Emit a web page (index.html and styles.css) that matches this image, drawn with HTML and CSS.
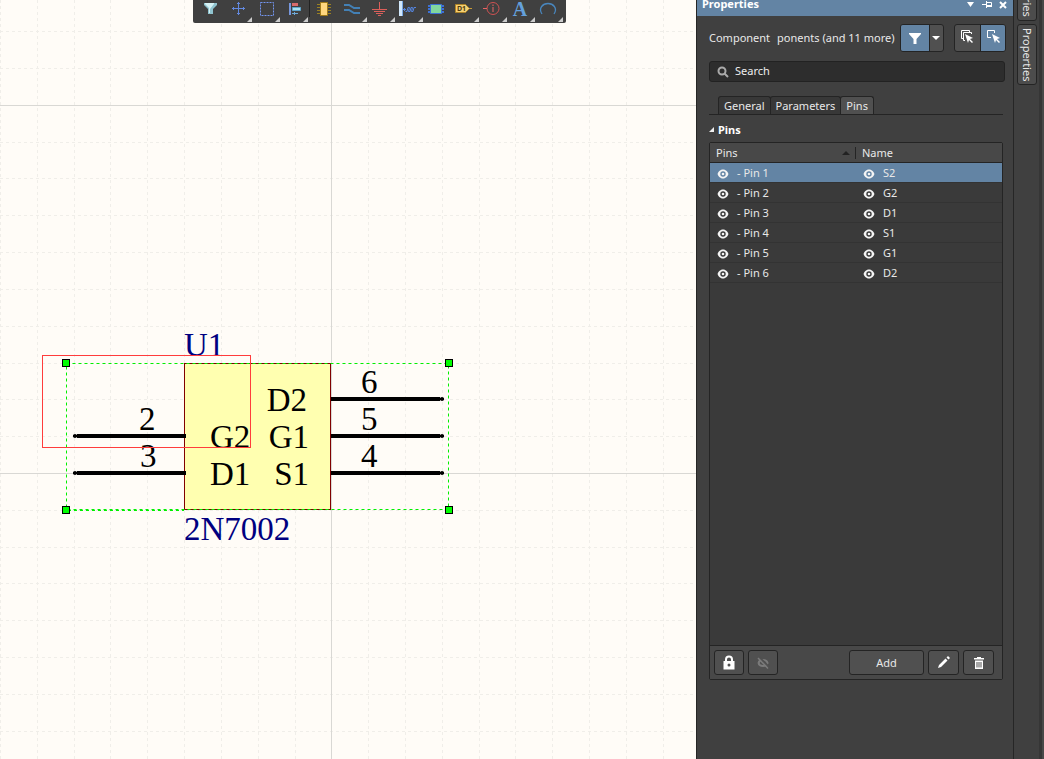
FILE: index.html
```
<!DOCTYPE html>
<html lang="en">
<head>
<meta charset="utf-8">
<title>Schematic editor</title>
<link rel="stylesheet" href="styles.css">
</head>
<body>
<svg class="defs" aria-hidden="true">
  <symbol id="eye" viewBox="0 0 12 12"><path fill="#f4f4f4" fill-rule="evenodd" d="M6 1.500C3 1.500 1 4 .6 6 1 8 3 10.500 6 10.500s5-2.500 5.400-4.500C11 4 9 1.500 6 1.500zm0 1.800a2.700 2.700 0 1 1 0 5.400 2.700 2.700 0 0 1 0-5.400z"/><circle cx="6" cy="6" r="1.300" fill="#f4f4f4"/></symbol>
</svg>
<div class="app">
  <main class="editor">
    <svg class="sheet" role="img" aria-label="Schematic sheet">
      <path class="grid" d="M.5 0V2000M37.500 0V2000M74.500 0V2000M110.500 0V2000M147.500 0V2000M184.500 0V2000M221.500 0V2000M258.500 0V2000M295.500 0V2000M368.500 0V2000M405.500 0V2000M442.500 0V2000M479.500 0V2000M515.500 0V2000M552.500 0V2000M589.500 0V2000M626.500 0V2000M663.500 0V2000"/>
      <path class="grid" d="M0 31.500H3000M0 68.500H3000M0 142.500H3000M0 178.500H3000M0 215.500H3000M0 252.500H3000M0 289.500H3000M0 326.500H3000M0 363.500H3000M0 399.500H3000M0 436.500H3000M0 510.500H3000M0 547.500H3000M0 583.500H3000M0 620.500H3000M0 657.500H3000M0 694.500H3000M0 731.500H3000"/>
      <path class="grid-major" d="M331.500 0V2000M0 105.500H3000M0 473.500H3000"/>
      <rect class="part" x="184.500" y="363.500" width="146" height="146"/>
      <g class="pin">
        <path class="pin-line" d="M77 436H186M77 473H186M331 399H440M331 436H440M331 473H440"/>
        <path class="pin-end" d="M73 436H78M73 473H78M438 399H444M438 436H444M438 473H444"/>
        <circle cx="442" cy="399" r="2"/><circle cx="442" cy="436" r="2"/><circle cx="442" cy="473" r="2"/>
        <circle cx="75" cy="436" r="2"/><circle cx="75" cy="473" r="2"/>
      </g>
      <g class="label">
        <text x="139" y="430">2</text><text x="140" y="467">3</text>
        <text x="361" y="393">6</text><text x="361" y="430">5</text><text x="361" y="467">4</text>
        <text x="210" y="448">G2</text><text x="210" y="485">D1</text>
        <text x="307" y="411" text-anchor="end">D2</text>
        <text x="309" y="448" text-anchor="end">G1</text>
        <text x="309" y="485" text-anchor="end">S1</text>
      </g>
      <g class="label label-part">
        <text x="184" y="356">U1</text><text x="184" y="540">2N7002</text>
      </g>
      <path class="selection" d="M66.500 363.500H448.500V509.500H66.500V363.500M68 510.500H184"/>
      <g class="handle">
        <rect x="62.500" y="359.500" width="7" height="7"/><rect x="445.500" y="359.500" width="7" height="7"/>
        <rect x="62.500" y="506.500" width="7" height="7"/><rect x="445.500" y="506.500" width="7" height="7"/>
      </g>
      <rect class="marquee" x="42.500" y="355.500" width="208" height="92"/>
    </svg>
    <div class="toolbar" role="toolbar" aria-label="Active bar">
      <button class="tool" aria-label="Filter"><svg viewBox="0 0 20 18"><path fill="#8fc3cf" d="M4 3h13v2l-4 4v5H8V9L4 5z"/><path fill="#d5f2f5" d="M5 3h9v1l-4 5v4H9V8L5 4z"/></svg></button>
      <button class="tool more" aria-label="Move"><svg viewBox="0 0 20 18"><path stroke="#6389df" fill="none" d="M10.500 2v13M4 8.500h13M9 3.500h3M9 13.500h3M5.500 7v3M15.500 7v3"/></svg></button>
      <button class="tool more" aria-label="Select"><svg viewBox="0 0 20 18"><path stroke="#7395ef" fill="none" stroke-dasharray="2 1" d="M4.500 2.500h13v13h-13z"/></svg></button>
      <button class="tool more" aria-label="Align"><svg viewBox="0 0 20 18"><path fill="#7797dc" d="M5 3h2v12H5z"/><path fill="#d86c6c" d="M8 3h6v3H8z"/><path fill="#a9e2ee" stroke="#5fa6cf" d="M8.500 7.500h8v3h-8z"/><path stroke="#6ea9d8" d="M8 13.500h6M10.500 12v3"/></svg></button>
      <span class="sep"></span>
      <button class="tool" aria-label="Place part"><svg viewBox="0 0 20 18"><path stroke="#9b8122" d="M2 4.500h14M2 7.500h14M2 10.500h14M2 13.500h14"/><path fill="#ffd77f" stroke="#a17b19" d="M5.500 2.500h7v13h-7z"/></svg></button>
      <button class="tool more" aria-label="Place wire"><svg viewBox="0 0 20 18"><path stroke="#4380b5" stroke-width="2" fill="none" d="M1 5h5l5 3h6M1 10h5l5 3h6"/></svg></button>
      <button class="tool more" aria-label="Place power port"><svg viewBox="0 0 20 18"><path stroke="#dc5f5a" fill="none" d="M8.500 2v7M1 9.500h15M3 11.500h11M5 13.500h7M7 15.500h3"/></svg></button>
      <button class="tool more" aria-label="Place harness"><svg viewBox="0 0 20 18"><path fill="#d2e8fb" d="M0 1h3v15H0z"/><path fill="#78a7e4" d="M3 1h1v15H3z"/><path stroke="#5584dc" fill="none" d="M4 9.500h3M5.500 8v3M6.500 11.500h1.500l1-4h1.500l-1 4h1.500l1-4h1.500l-1 4h1.500l1-4h2"/></svg></button>
      <button class="tool" aria-label="Place sheet symbol"><svg viewBox="0 0 20 18"><path stroke="#3c71d6" stroke-width="2" d="M1 6h16M1 9h16M1 12h16"/><path fill="#81d69e" stroke="#3c71d6" d="M3.500 4.500h11v9h-11z"/></svg></button>
      <button class="tool more" aria-label="Place port"><svg viewBox="0 0 20 18"><path fill="#f5cf72" stroke="#ad8429" d="M.5 4.500h10l4 4-4 4H.5z"/><path stroke="#c89a36" d="M14 8.500h3"/><text x="2" y="11" class="tool-port">D1</text></svg></button>
      <button class="tool more" aria-label="Place directive"><svg viewBox="0 0 20 18"><circle cx="10" cy="8.500" r="6" fill="none" stroke="#d05252"/><path stroke="#e86464" d="M0 8.500h4M10 7v5M10 4.500v1.500"/></svg></button>
      <button class="tool more" aria-label="Place text"><svg viewBox="0 0 20 18"><text x="9" y="16" class="tool-text" text-anchor="middle">A</text></svg></button>
      <button class="tool more" aria-label="Place arc"><svg viewBox="0 0 20 18"><path fill="none" stroke="#4986bd" stroke-width="1.300" d="M3 14C-1 8 4 3.500 9 3.500s10 4.500 6 10.500"/></svg></button>
    </div>
  </main>

  <aside class="panel">
    <header class="panel-title">
      <h1>Properties</h1>
      <button aria-label="Panel menu"><svg viewBox="0 0 12 10"><path fill="#fff" d="M2 2h7L5.500 7z"/></svg></button>
      <button aria-label="Pin panel"><svg viewBox="0 0 12 10"><path fill="none" stroke="#fff" d="M1 4.500h4M5.500 1v7M6 2.500h4.500v4"/><path stroke="#fff" stroke-width="2" d="M6 6h5"/></svg></button>
      <button aria-label="Close panel"><svg viewBox="0 0 12 10"><path stroke="#fff" stroke-width="2" d="M3 2l6 6M9 2L3 8"/></svg></button>
    </header>
    <div class="panel-body">
      <div class="scope">
        <span>Component</span>
        <span class="scope-filter">ponents (and 11 more)</span>
        <div class="group">
          <button class="on" aria-label="Selection filter"><svg viewBox="0 0 16 16"><path fill="#fff" d="M2 3h12v1L9.500 9v5h-3V9L2 4z"/></svg></button>
          <button class="narrow" aria-label="Filter options"><svg viewBox="0 0 16 16"><path fill="#fff" d="M4 6h8l-4 4z"/></svg></button>
        </div>
        <div class="group">
          <button class="pick" aria-label="Select all objects"><svg viewBox="0 0 16 16"><path fill="none" stroke="#fff" d="M4 9.500H2.500v-8h8V3M6 11.500H4.500v-8h8V5"/><path fill="#fff" d="M6 5l8 4-3 1 3 3-1 1-3-3-1 3z"/></svg></button>
          <button class="pick on" aria-label="Select one object"><svg viewBox="0 0 16 16"><path fill="none" stroke="#fff" d="M6 8.500H2.500v-7h7V4"/><path fill="#fff" d="M7 5l8 4-3 1 3 3-1 1-3-3-1 3z"/></svg></button>
        </div>
      </div>
      <label class="search">
        <svg viewBox="0 0 12 12"><circle cx="5" cy="5" r="3.500" fill="none" stroke="#aaa" stroke-width="2"/><path stroke="#aaa" stroke-width="2" d="M7.500 7.500l3.500 3.500"/></svg>
        <input type="text" placeholder="Search" aria-label="Search">
      </label>
      <nav class="tabs" role="tablist">
        <button role="tab">General</button><button role="tab">Parameters</button><button role="tab" class="current" aria-selected="true">Pins</button>
      </nav>
      <h2><svg viewBox="0 0 6 6"><path fill="#eee" d="M5 0v5H0z"/></svg>Pins</h2>
      <section class="pins">
        <div class="pins-scroll">
        <table>
          <thead><tr><th>Pins<svg class="sort" viewBox="0 0 8 4"><path fill="#222" d="M0 4l4-4 4 4z"/></svg></th><th>Name</th></tr></thead>
          <tbody>
            <tr class="selected"><td><svg><use href="#eye"/></svg>- Pin 1</td><td><svg><use href="#eye"/></svg>S2</td></tr>
            <tr><td><svg><use href="#eye"/></svg>- Pin 2</td><td><svg><use href="#eye"/></svg>G2</td></tr>
            <tr><td><svg><use href="#eye"/></svg>- Pin 3</td><td><svg><use href="#eye"/></svg>D1</td></tr>
            <tr><td><svg><use href="#eye"/></svg>- Pin 4</td><td><svg><use href="#eye"/></svg>S1</td></tr>
            <tr><td><svg><use href="#eye"/></svg>- Pin 5</td><td><svg><use href="#eye"/></svg>G1</td></tr>
            <tr><td><svg><use href="#eye"/></svg>- Pin 6</td><td><svg><use href="#eye"/></svg>D2</td></tr>
          </tbody>
        </table>
        </div>
        <footer class="actions">
          <button class="btn" aria-label="Lock pins"><svg viewBox="0 0 16 16"><path fill="#fff" fill-rule="evenodd" d="M2.500 6H4V4.500a4 4 0 0 1 8 0V6h1.500v8.500h-11zM6 6h4V4.500a2 2 0 0 0-4 0zm2 2.500a1.500 1.500 0 1 0 0 3 1.500 1.500 0 0 0 0-3z"/></svg></button>
          <button class="btn" aria-label="Hide pins" disabled><svg viewBox="0 0 16 16"><path fill="none" stroke="#7b7b7b" stroke-width="2" d="M3.500 8c1-4 8-4 9 0-1 4-8 4-9 0"/><path stroke="#505050" stroke-width="2" d="M4 2l10 10"/><path stroke="#7b7b7b" stroke-width="1.500" d="M3 3l10 10.500"/></svg></button>
          <button class="btn add">Add</button>
          <button class="btn" aria-label="Edit pin"><svg viewBox="0 0 16 16"><path fill="#fff" d="M2 13l1-3 6.500-6.500 2 2L5 12zM10.500 2.500L12 1l2 2-1.500 1.500z"/></svg></button>
          <button class="btn" aria-label="Delete pin"><svg viewBox="0 0 16 16"><path fill="#fff" fill-rule="evenodd" d="M6 2h4v1h3v1.500H3V3h3zM4 5.500h8V14H4zM5.500 7v5.500h1V7zM7.500 7v5.500h1V7zM9.500 7v5.500h1V7z"/></svg></button>
        </footer>
      </section>
    </div>
  </aside>

  <nav class="dock">
    <button class="dock-tab first">Libraries</button>
    <button class="dock-tab">Properties</button>
  </nav>
  <div class="edge"></div>
</div>
</body>
</html>
```
FILE: styles.css
```
* { box-sizing: border-box; }
body { margin: 0; background: #404040; color: #e8e8e8; font: 11px/16px "Noto Sans", "Open Sans", sans-serif; }
button { font: inherit; color: inherit; padding: 0; margin: 0; border: 0; background: none; }
h1, h2 { margin: 0; font-size: 11px; color: #fff; }
svg { display: block; }
.defs { position: absolute; width: 0; height: 0; }
.app { display: flex; height: 100vh; overflow: hidden; }

.editor { position: relative; flex: 1; min-width: 0; background: #fffcf7; }
.sheet { width: 100%; height: 100%; }
.grid { fill: none; stroke: #f0eee9; stroke-dasharray: 3 3; }
.grid-major { fill: none; stroke: #d9d8d4; }
.part { fill: #ffffb0; stroke: #800000; }
.pin-line { stroke: #000; stroke-width: 4; }
.pin-end { stroke: #000; stroke-width: 2; }
.label { font: 33px "Liberation Serif", serif; fill: #000; }
.label-part { fill: #000080; }
.selection { fill: none; stroke: #00f000; stroke-dasharray: 3 3; }
.handle { fill: #00ff00; stroke: #000; }
.marquee { fill: none; stroke: #ff3c3c; }

.toolbar { position: absolute; top: 0; left: 193px; display: flex; height: 23px; padding: 0 3px; background: #404040; border-radius: 0 0 2px 2px; }
.tool { position: relative; display: flex; align-items: flex-start; width: 28px; height: 22px; padding: 0 4px; }
.tool svg { width: 20px; height: 18px; overflow: visible; }
.more::after { content: ""; position: absolute; right: 0; bottom: 0; border: solid transparent; border-width: 5px 0 0 5px; border-right: 0; border-bottom: 5px solid #ccc; border-top: 0; }
.sep { width: 1px; height: 17px; margin: 0 1px; background: #222; }
.tool-port { font: bold 7px "Noto Sans", sans-serif; fill: #4b3a10; }
.tool-text { font: bold 20px "Liberation Serif", serif; fill: #64a0dc; }

.panel { display: flex; flex-direction: column; width: 318px; border: solid #262626; border-width: 0 1px; }
.panel-title { display: flex; align-items: flex-start; height: 16px; padding: 0 2px 0 5px; background: #6384a4; }
.panel-title h1 { flex: 1; line-height: 8px; }
.panel-title button { width: 16px; height: 10px; padding: 0 2px; }
.panel-title svg { width: 12px; height: 10px; }
.panel-body { flex: 1; padding: 8px 8px 79px 12px; display: flex; flex-direction: column; }

.scope { display: flex; align-items: center; gap: 10px; height: 28px; }
.scope-filter { flex: 1; white-space: nowrap; text-align: right; margin: 0 -5px 0 -3px; }
.group { display: flex; flex: none; border: 1px solid #242424; border-radius: 3px; background: #505050; overflow: hidden; }
.group button { display: flex; align-items: center; justify-content: center; width: 28px; height: 26px; }
.group .narrow { width: 14px; border-left: 1px solid #242424; }
.group .pick { width: 25px; }
.group .pick + .pick { border-left: 1px solid #242424; }
.group .pick svg { margin-bottom: 2px; }
.group svg { width: 16px; height: 16px; flex: none; }
.group .on { background: #6384a4; }

.search { display: flex; align-items: center; gap: 6px; height: 21px; margin-top: 9px; padding: 0 7px; background: #2d2d2d; border: 1px solid #222; border-radius: 3px; }
.search svg { width: 12px; height: 12px; flex: none; }
.search input { flex: 1; min-width: 0; padding: 0 0 1px; border: 0; outline: 0; background: none; color: #eee; font: inherit; }
.search input::placeholder { color: #eee; opacity: 1; }

.tabs { display: flex; height: 19px; margin: 14px 2px 0 0; padding-left: 9px; border-bottom: 1px solid #242424; }
.tabs button { padding: 0 5px; border: 1px solid #242424; border-bottom: 0; border-radius: 3px 3px 0 0; margin-right: -1px; background: #383838; }
.tabs .current { background: #505050; }
h2 { display: flex; align-items: center; gap: 3px; margin-top: 7px; }
h2 svg { width: 6px; height: 6px; }

.pins { flex: 1; display: flex; flex-direction: column; margin: 4px 2px 0 0; border: 1px solid #242424; border-radius: 2px; background: #3a3a3a; }
.pins-scroll { flex: 1; }
table { width: 100%; table-layout: fixed; border-collapse: separate; border-spacing: 0; }
th, td { height: 20px; padding: 0 0 0 7px; text-align: left; font-weight: normal; line-height: 16px; border-bottom: 1px solid #333; }
th { position: relative; padding-left: 6px; background: #484848; border-bottom-color: #242424; }
th + th::before { content: ""; position: absolute; left: -1px; top: 4px; width: 1px; height: 12px; background: #242424; }
.sort { position: absolute; right: 6px; top: 8px; width: 8px; height: 4px; }
td svg { display: inline-block; width: 12px; height: 12px; margin-right: 8px; vertical-align: -3px; }
.selected td { background: #6384a4; }

.actions { display: flex; align-items: center; gap: 4px; height: 34px; padding: 0 8px 0 4px; background: #484848; border-top: 1px solid #242424; }
.btn { display: flex; align-items: center; justify-content: center; width: 30px; height: 25px; border: 1px solid #242424; border-radius: 3px; background: #505050; }
.btn svg { width: 16px; height: 16px; }
.add { width: 75px; margin-left: auto; }
.add ~ .btn { width: 31px; }

.dock { display: flex; flex-direction: column; align-items: center; gap: 3px; width: 25px; }
.dock-tab { width: 20px; height: 61px; border: 1px solid #242424; border-radius: 3px; background: #4c4c4c; writing-mode: vertical-rl; text-align: center; }
.first { height: 61px; margin-top: -40px; text-align: right; padding-bottom: 3px; }
.edge { width: 5px; background: #484848; border-left: 3px solid #363636; }
```
